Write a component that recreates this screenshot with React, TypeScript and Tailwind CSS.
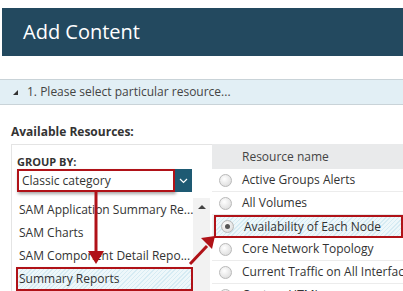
import React from "react";

const groups = [
  "SAM Application Summary Re...",
  "SAM Charts",
  "SAM Component Detail Repo...",
  "Summary Reports",
];

const resources = [
  "Active Groups Alerts",
  "All Volumes",
  "Availability of Each Node",
  "Core Network Topology",
  "Current Traffic on All Interfaces",
  "Custom HTML",
];

const hatch =
  "bg-[repeating-linear-gradient(135deg,#d6ebf3_0px,#d6ebf3_1px,#eef7fa_1px,#eef7fa_3px)]";

function Radio({ checked }: { checked?: boolean }) {
  return (
    <span className="flex h-[13px] w-[13px] shrink-0 items-center justify-center rounded-full border border-[#b9b9b9] bg-[radial-gradient(circle_at_40%_35%,#ffffff,#d6d6d6)]">
      {checked && <span className="h-[5px] w-[5px] rounded-full bg-[#555]" />}
    </span>
  );
}

export default function App() {
  return (
    <div className="relative h-[291px] w-[403px] overflow-hidden bg-white font-['Open_Sans',sans-serif] text-[#333]">
      <div className="pl-[2px] pt-[8px]">
        <div className="flex h-[48px] items-center bg-[#23495f] pl-[21px] text-[20px] text-white">
          Add Content
        </div>
      </div>

      <div className="mt-[23px] flex h-[26px] items-center border-y border-[#c9d3d8] bg-[#e2eff5] text-[12px] text-[#444]">
        <span className="ml-[13px] mr-[9px] h-0 w-0 border-b-[5px] border-l-[5px] border-b-[#333] border-l-transparent" />
        <span>1. Please select particular resource...</span>
      </div>

      <div className="ml-[11px] mt-[18px] text-[12px] font-bold text-[#333]">Available Resources:</div>

      <div className="ml-[11px] mt-[3px] flex">
        {/* group by */}
        <div className="w-[201px] shrink-0 border-l border-t border-[#e4e4e4] pl-[5px] pt-[10px]">
          <div className="text-[11px] font-bold leading-[14px] text-[#333]">GROUP BY:</div>
          <div className="flex h-[23px]">
            <div className="flex w-[158px] items-center whitespace-nowrap border-2 border-[#b01218] pl-[3px] text-[12px] shadow-[1px_2px_3px_rgba(0,0,0,0.35)]">
              Classic category
            </div>
            <div className="flex w-[17px] items-center justify-center bg-[#1e5a73]">
              <svg width="9" height="6" viewBox="0 0 9 6">
                <path d="M1 1l3.5 3.5L8 1" stroke="#fff" strokeWidth="1.2" fill="none" />
              </svg>
            </div>
          </div>
          <div className="-ml-[1px] mt-[6px] flex">
            <div className="w-[177px] overflow-hidden">
              {groups.map((g, i) => (
                <div
                  key={g}
                  className={
                    i === 3
                      ? `flex h-[24px] items-center whitespace-nowrap border-2 border-[#b01218] pl-[1px] text-[12px] shadow-[1px_2px_3px_rgba(0,0,0,0.3)] ${hatch}`
                      : "flex h-[23px] items-center whitespace-nowrap pl-[3px] text-[12px]"
                  }
                >
                  {g}
                </div>
              ))}
            </div>
            <div className="flex w-[17px] justify-center bg-[#f2f2f2] pt-[7px]">
              <span className="h-0 w-0 border-x-[4px] border-b-[4px] border-x-transparent border-b-[#444]" />
            </div>
          </div>
        </div>

        {/* resources */}
        <div className="min-w-0 flex-1 overflow-hidden bg-[#f7f7f7]">
          <div className="flex h-[25px] items-center bg-[#e9eaeb] pl-[30px] text-[12px] text-[#444]">
            Resource name
          </div>
          {resources.map((r, i) => (
            <div
              key={r}
              className={
                i === 2
                  ? `ml-[2px] flex h-[23px] items-center gap-[10px] whitespace-nowrap border-2 border-[#b01218] pl-[5px] text-[12px] shadow-[1px_2px_3px_rgba(0,0,0,0.3)] ${hatch}`
                  : "flex h-[23px] items-center gap-[10px] whitespace-nowrap border-b border-[#ececec] bg-white pl-[7px] text-[12px]"
              }
            >
              <Radio checked={i === 2} />
              {r}
            </div>
          ))}
        </div>
      </div>

      {/* annotation arrows */}
      <svg className="absolute left-0 top-0" width="403" height="291" viewBox="0 0 403 291">
        <g fill="#b01218" stroke="#b01218">
          <line x1="96" y1="191" x2="96" y2="252" strokeWidth="3" />
          <polygon points="88,251 104,251 96,264" strokeWidth="0" />
          <line x1="190" y1="264" x2="207" y2="246" strokeWidth="3" />
          <polygon points="201,238 215,236 212,249" strokeWidth="0" />
        </g>
      </svg>
    </div>
  );
}
